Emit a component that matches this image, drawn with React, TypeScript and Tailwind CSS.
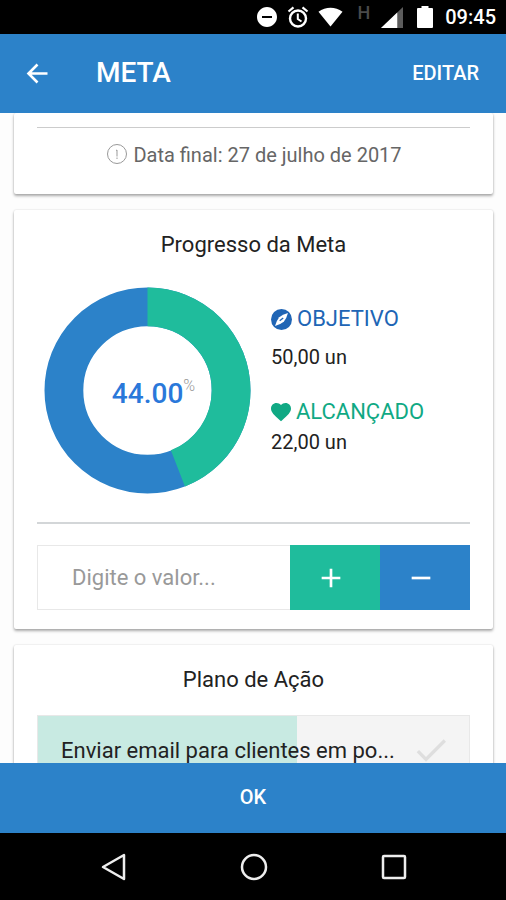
import type { ReactNode } from "react";
import { MdAdd, MdCheck, MdDoNotDisturbOn, MdFavorite, MdRemove } from "react-icons/md";

const GOAL = { target: 50, reached: 22 };
const TASKS = [{ id: 1, title: "Enviar email para clientes em po...", progress: 60 }];

function formatUnits(value: number) {
  return `${value.toFixed(2).replace(".", ",")} un`;
}

function StatusBar() {
  return (
    <div className="flex h-[34px] shrink-0 items-center justify-end bg-black pr-[10px] text-white">
      <MdDoNotDisturbOn className="mr-[7px] size-6" />
      <svg className="mr-2 size-6" viewBox="0 0 24 24" fill="none" stroke="currentColor" aria-hidden="true">
        <circle cx="12" cy="13.500" r="8" strokeWidth="2.400" />
        <path d="M11.800 8.500V14L15.500 16.500" strokeWidth="2" />
        <path d="M2.500 6.500L7.500 2.300M21.500 6.500L16.500 2.300" strokeWidth="2.200" />
      </svg>
      <svg className="mr-[14px] h-5 w-[25px]" viewBox="0 0 26 20" fill="currentColor" aria-hidden="true">
        <path d="M0.500 4.500C8 -1 18 -1 25.500 4.500L13 20Z" />
      </svg>
      <span className="mr-[11px] h-7 text-lg leading-5 font-medium text-[#4a4a4a]">H</span>
      <svg className="mr-[14px] h-[21px] w-[22px]" viewBox="0 0 23 22" aria-hidden="true">
        <path d="M23 0V22H0Z" fill="#5c5c5c" />
        <path d="M17 5.700V22H0Z" fill="#fff" />
      </svg>
      <svg className="mr-3 h-[22px] w-[16px]" viewBox="0 0 16 22" fill="currentColor" aria-hidden="true">
        <path d="M4.500 0H11.500V2H15Q16 2 16 3V21Q16 22 15 22H1Q0 22 0 21V3Q0 2 1 2H4.500Z" />
      </svg>
      <time className="text-xl leading-6 font-medium">09:45</time>
    </div>
  );
}

function Card({ children, className = "" }: { children: ReactNode; className?: string }) {
  return (
    <section
      className={`shrink-0 rounded-xs bg-white px-[23px] shadow-[0_2px_3px_rgba(0,0,0,0.32),0_0_2px_rgba(0,0,0,0.14)] ${className}`}
    >
      {children}
    </section>
  );
}

function Donut({ percent }: { percent: number }) {
  const radius = 84;
  const length = 2 * Math.PI * radius;
  return (
    <div className="grid size-[207px] shrink-0 place-items-center">
      <svg className="col-start-1 row-start-1 size-full -rotate-90" viewBox="0 0 208 208" fill="none" aria-hidden="true">
        <circle cx="104" cy="104" r={radius} stroke="#2c82c9" strokeWidth="39" />
        <circle
          cx="104"
          cy="104"
          r={radius}
          stroke="#1fbc9c"
          strokeWidth="39"
          strokeDasharray={`${(length * percent) / 100} ${length}`}
        />
      </svg>
      <p className="col-start-1 row-start-1 flex pt-[6px] pl-3 text-[28px] leading-8 font-medium text-[#2a78da]">
        {percent.toFixed(2)}
        <span className="text-base leading-4 font-light text-[#999]">%</span>
      </p>
    </div>
  );
}

export default function App() {
  return (
    <div className="flex h-screen flex-col overflow-hidden bg-[#fdfdfd] font-[Roboto,sans-serif] text-[#222]">
      <StatusBar />
      <header className="flex h-[79px] shrink-0 items-center bg-[#2c82c9] pr-[27px] pb-px pl-[22px] text-white">
        <button type="button" aria-label="Voltar" className="mr-11">
          <svg className="size-[30px]" viewBox="0 0 30 30" fill="none" stroke="currentColor" strokeWidth="2.600" aria-hidden="true">
            <path d="M25.500 15.500H7M15.500 6.500L6.500 15.500L15.500 24.500" />
          </svg>
        </button>
        <h1 className="flex-1 text-[28px] leading-8 font-medium">META</h1>
        <button type="button" className="text-xl font-medium">
          EDITAR
        </button>
      </header>

      <main className="flex min-h-0 flex-1 flex-col gap-4 overflow-hidden pr-[13px] pl-[14px]">
        <Card className="pt-[14px] pb-6">
          <hr className="border-[#ccc]" />
          <p className="flex items-center justify-center gap-1 pt-3 text-xl leading-[30px] text-[#666]">
            <svg className="size-6" viewBox="0 0 24 24" fill="none" stroke="#999" aria-hidden="true">
              <circle cx="12" cy="11" r="9.500" />
              <path d="M11 7.500L12 7V13.500M12 14.500V16" />
            </svg>
            Data final: 27 de julho de 2017
          </p>
        </Card>

        <Card className="pt-5 pb-[19px]">
          <h2 className="text-center text-[22px] leading-[30px]">Progresso da Meta</h2>
          <div className="flex gap-5 pt-[27px] pl-[7px]">
            <Donut percent={(GOAL.reached / GOAL.target) * 100} />
            <dl className="pt-[17px] text-xl leading-[30px]">
              <dt className="flex items-center gap-[5px] text-[22px] text-[#2065b5]">
                <svg className="size-[21px]" viewBox="0 0 21 21" aria-hidden="true">
                  <circle cx="10.500" cy="10.500" r="10.500" fill="currentColor" />
                  <path d="M17 4Q15.500 9.500 12.800 12.800Q9.500 15.500 4 17Q5.500 11.500 8.200 8.200Q11.500 5.500 17 4Z" fill="#fff" />
                  <path d="M8.700 11.800L12.200 9" stroke="currentColor" strokeWidth="1.300" />
                </svg>
                OBJETIVO
              </dt>
              <dd className="pt-2">{formatUnits(GOAL.target)}</dd>
              <dt className="flex items-center gap-[3px] pt-[25px] text-[22px] text-[#10a984]">
                <MdFavorite className="-ml-0.5 size-6" />
                ALCANÇADO
              </dt>
              <dd>{formatUnits(GOAL.reached)}</dd>
            </dl>
          </div>
          <hr className="mt-7 border-t-2 border-[#d3d6d8]" />
          <form className="mt-[21px] flex h-[65px]" onSubmit={(event) => event.preventDefault()}>
            <input
              type="text"
              inputMode="decimal"
              aria-label="Valor"
              placeholder="Digite o valor..."
              className="min-w-0 flex-1 border border-r-0 border-[#e8e8e8] px-[34px] text-[22px] outline-none placeholder:text-[#999]"
            />
            <button type="button" aria-label="Somar" className="grid w-[90px] place-items-center bg-[#1fbc9c] text-white">
              <MdAdd className="mr-2 size-8" />
            </button>
            <button type="button" aria-label="Subtrair" className="grid w-[90px] place-items-center bg-[#2c82c9] text-white">
              <MdRemove className="mr-2 size-8" />
            </button>
          </form>
        </Card>

        <Card className="pt-5 pb-5">
          <h2 className="text-center text-[22px] leading-[30px]">Plano de Ação</h2>
          <ul className="pt-5">
            {TASKS.map((task) => (
              <li key={task.id} className="grid h-[70px] border border-[#e8e8e8] bg-[#f4f4f4]">
                <div className="col-start-1 row-start-1 bg-[#c8eae2]" style={{ width: `${task.progress}%` }} />
                <div className="col-start-1 row-start-1 flex items-center justify-between pr-[18px] pl-[23px] text-[22px]">
                  <span>{task.title}</span>
                  <MdCheck className="size-10 text-[#dedede]" />
                </div>
              </li>
            ))}
          </ul>
        </Card>
      </main>

      <button type="button" className="h-[70px] shrink-0 bg-[#2c82c9] pb-0.5 text-xl font-medium text-white">
        OK
      </button>
      <nav className="flex h-[67px] shrink-0 items-center justify-center gap-[112px] bg-black pl-px text-[#eee]">
        <button type="button" aria-label="Voltar">
          <svg className="size-7" viewBox="0 0 28 28" fill="none" stroke="currentColor" strokeWidth="2.500" aria-hidden="true">
            <path d="M24 2V26L3 14Z" strokeLinejoin="round" />
          </svg>
        </button>
        <button type="button" aria-label="Início">
          <svg className="size-7" viewBox="0 0 28 28" fill="none" stroke="currentColor" strokeWidth="2.500" aria-hidden="true">
            <circle cx="14" cy="14" r="12" />
          </svg>
        </button>
        <button type="button" aria-label="Recentes">
          <svg className="size-7" viewBox="0 0 28 28" fill="none" stroke="currentColor" strokeWidth="2.500" aria-hidden="true">
            <rect x="3" y="3" width="22" height="22" rx="1" />
          </svg>
        </button>
      </nav>
    </div>
  );
}
